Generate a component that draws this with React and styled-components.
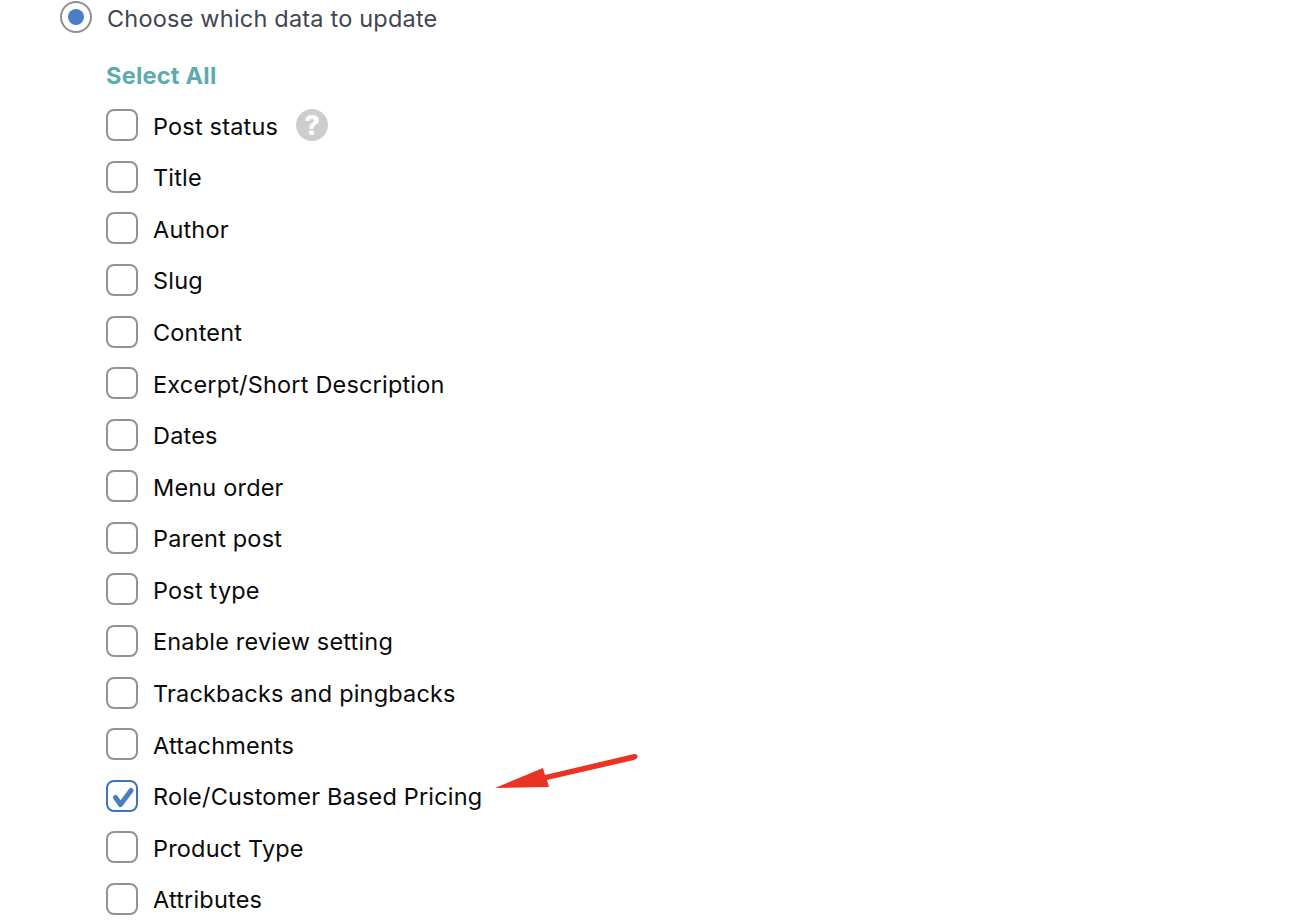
import styled, { createGlobalStyle } from "styled-components";

const fields = [
  { name: "Post status", help: true },
  { name: "Title" },
  { name: "Author" },
  { name: "Slug" },
  { name: "Content" },
  { name: "Excerpt/Short Description" },
  { name: "Dates" },
  { name: "Menu order" },
  { name: "Parent post" },
  { name: "Post type" },
  { name: "Enable review setting" },
  { name: "Trackbacks and pingbacks" },
  { name: "Attachments" },
  { name: "Role/Customer Based Pricing", checked: true, arrow: true },
  { name: "Product Type" },
  { name: "Attributes" },
];

export default function App() {
  return (
    <Page>
      <GlobalStyle />
      <RadioRow>
        <Radio />
        <RadioLabel>Choose which data to update</RadioLabel>
      </RadioRow>
      <Fields>
        <SelectAll>Select All</SelectAll>
        <Rows>
          {fields.map((field) => (
            <Row key={field.name}>
              <Checkbox $checked={field.checked}>
                {field.checked && (
                  <Tick width="26" height="26" viewBox="0 0 26 26">
                    <path
                      d="M6.5 14.5 L11.5 21.5 L22 7.5"
                      fill="none"
                      stroke="#4a7ebd"
                      strokeWidth="5"
                      strokeLinecap="round"
                      strokeLinejoin="round"
                    />
                  </Tick>
                )}
              </Checkbox>
              <Label>{field.name}</Label>
              {field.help && <Help>?</Help>}
              {field.arrow && (
                <Arrow width="146" height="44" viewBox="0 0 146 44">
                  <path
                    d="M0 36 L48 16 L50 23 L139 2 Q143 2 142.5 5 Q142 7 139 8 L52 28 L54 35 Z"
                    fill="#ea3323"
                  />
                </Arrow>
              )}
            </Row>
          ))}
        </Rows>
      </Fields>
    </Page>
  );
}

const GlobalStyle = createGlobalStyle`
  html, body {
    margin: 0;
    height: 100%;
    background: #fff;
    overflow: hidden;
  }
`;

const Page = styled.div`
  box-sizing: border-box;
  height: 924px;
  overflow: hidden;
  padding: 1px 0 0 60px;
  font-family: Inter, "Liberation Sans", Arial, sans-serif;
`;

const RadioRow = styled.div`
  display: flex;
  align-items: center;
  height: 32px;
`;

const Radio = styled.span`
  box-sizing: border-box;
  width: 32px;
  height: 32px;
  border: 2px solid #8e8e93;
  border-radius: 50%;
  display: flex;
  align-items: center;
  justify-content: center;
  flex-shrink: 0;
  &::after {
    content: "";
    width: 16px;
    height: 16px;
    border-radius: 50%;
    background: #4a7fc7;
  }
`;

const RadioLabel = styled.span`
  margin-left: 15px;
  padding-top: 2px;
  font-size: 23.5px;
  letter-spacing: 0.2px;
  color: #3f4652;
`;

const Fields = styled.div`
  padding: 27px 0 0 46px;
`;

const SelectAll = styled.div`
  font-size: 23.5px;
  line-height: 32px;
  font-weight: 700;
  letter-spacing: 0.25px;
  color: #5dabae;
`;

const Rows = styled.div`
  display: flex;
  flex-direction: column;
  gap: 19.58px;
  margin-top: 17.2px;
`;

const Row = styled.div`
  position: relative;
  display: flex;
  align-items: center;
  height: 32px;
`;

const Checkbox = styled.span`
  box-sizing: border-box;
  width: 32px;
  height: 32px;
  border: 2px solid ${(p) => (p.$checked ? "#3e74b3" : "#939396")};
  border-radius: 8px;
  background: #fff;
  display: flex;
  align-items: center;
  justify-content: center;
  flex-shrink: 0;
`;

const Tick = styled.svg`
  flex-shrink: 0;
`;

const Label = styled.span`
  margin-left: 15px;
  padding-top: 2px;
  font-size: 23.5px;
  letter-spacing: 0.18px;
  color: #0a0a0a;
`;

const Help = styled.span`
  width: 32px;
  height: 32px;
  margin-left: 18px;
  border-radius: 50%;
  background: #cdcdcd;
  color: #fff;
  font-size: 27px;
  font-weight: 800;
  display: flex;
  align-items: center;
  justify-content: center;
`;

const Arrow = styled.svg`
  position: absolute;
  left: 389px;
  top: -28px;
`;
